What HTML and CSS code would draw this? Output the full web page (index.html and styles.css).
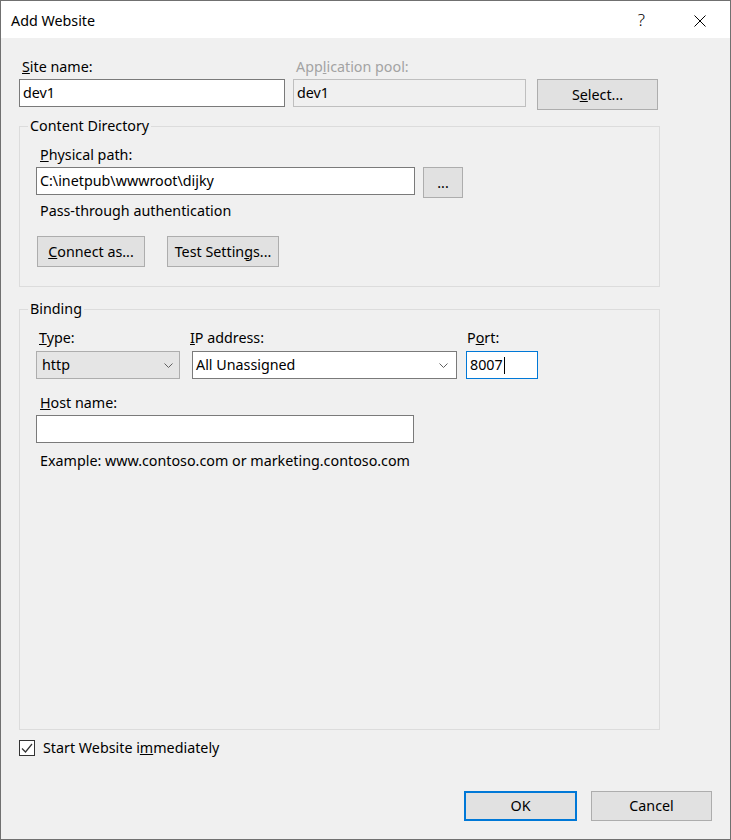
FILE: index.html
```html
<!DOCTYPE html>
<html lang="en">
<head>
<meta charset="utf-8">
<title>Add Website</title>
<link rel="stylesheet" href="styles.css">
</head>
<body>
<div class="window">
  <header class="titlebar">
    <span class="title">Add Website</span>
    <span class="help">?</span>
    <svg class="close" width="12" height="12" viewBox="0 0 12 12" aria-label="Close">
      <path d="M0.5 0.5 L11.5 11.5 M11.5 0.5 L0.5 11.5" stroke="#000" stroke-width="1" fill="none"/>
    </svg>
  </header>

  <main class="body">
    <div class="top-row">
      <div class="field f-site">
        <div class="lbl"><u>S</u>ite name:</div>
        <div class="textbox">dev1</div>
      </div>
      <div class="field f-pool">
        <div class="lbl disabled">App<u>l</u>ication pool:</div>
        <div class="textbox readonly">dev1</div>
      </div>
      <button class="btn btn-select">S<u>e</u>lect...</button>
    </div>

    <fieldset class="group group-content">
      <legend>Content Directory</legend>
      <div class="group-inner">
        <div class="lbl lbl-in"><u>P</u>hysical path:</div>
        <div class="path-row">
          <div class="textbox tb-path">C:\inetpub\wwwroot\dijky</div>
          <button class="btn btn-browse">...</button>
        </div>
        <div class="note">Pass-through authentication</div>
        <div class="btn-row">
          <button class="btn btn-connect"><u>C</u>onnect as...</button>
          <button class="btn btn-test">Test Settin<u>g</u>s...</button>
        </div>
      </div>
    </fieldset>

    <fieldset class="group group-binding">
      <legend>Binding</legend>
      <div class="group-inner">
        <div class="bind-row">
          <div class="field f-type">
            <div class="lbl lbl-type"><u>T</u>ype:</div>
            <div class="combo combo-list">
              <span class="combo-text">http</span>
              <svg class="chev" width="9" height="5" viewBox="0 0 9 5"><polyline points="0.5,0.5 4.5,4.5 8.5,0.5" fill="none" stroke="#606060" stroke-width="1"/></svg>
            </div>
          </div>
          <div class="field f-ip">
            <div class="lbl lbl-ip"><u>I</u>P address:</div>
            <div class="combo combo-edit">
              <span class="combo-text">All Unassigned</span>
              <svg class="chev" width="9" height="5" viewBox="0 0 9 5"><polyline points="0.5,0.5 4.5,4.5 8.5,0.5" fill="none" stroke="#606060" stroke-width="1"/></svg>
            </div>
          </div>
          <div class="field f-port">
            <div class="lbl lbl-port">P<u>o</u>rt:</div>
            <div class="textbox focused">8007<span class="caret"></span></div>
          </div>
        </div>
        <div class="lbl lbl-in lbl-host"><u>H</u>ost name:</div>
        <div class="textbox tb-host"></div>
        <div class="note note-example">Example: www.contoso.com or marketing.contoso.com</div>
      </div>
    </fieldset>

    <label class="check-row">
      <span class="checkbox">
        <svg width="14" height="14" viewBox="0 0 14 14"><polyline points="2,7.5 5.5,11 12,3" fill="none" stroke="#333" stroke-width="1.2"/></svg>
      </span>
      <span>Start Website i<u>m</u>mediately</span>
    </label>

    <div class="footer">
      <button class="btn btn-ok">OK</button>
      <button class="btn btn-cancel">Cancel</button>
    </div>
  </main>
</div>
</body>
</html>
```

FILE: styles.css
```css
* { box-sizing: border-box; }

html, body {
  margin: 0;
  padding: 0;
}

body {
  font-family: "Noto Sans", "Segoe UI", sans-serif;
  font-size: 14.3px;
  line-height: 20px;
  color: #000;
  background: #fff;
}

.window {
  width: 731px;
  height: 840px;
  border: 1px solid #707070;
  background: #f0f0f0;
  display: flex;
  flex-direction: column;
}

/* title bar */
.titlebar {
  height: 37px;
  flex: none;
  background: #fff;
  display: flex;
  align-items: center;
  padding: 2px 24px 0 10px;
}

.title {
  flex: 1;
}

.help {
  font-size: 17px;
  font-weight: 300;
  margin-right: 49px;
  margin-top: -1px;
}

.close {
  display: block;
  margin-top: 1px;
}

/* body */
.body {
  flex: 1;
  display: flex;
  flex-direction: column;
  padding: 19px 18px 18px 18px;
  min-height: 0;
}

.lbl {
  height: 20px;
  padding-left: 3px;
  white-space: nowrap;
}

.lbl.disabled {
  color: #a3a3a3;
}

.textbox {
  height: 28px;
  border: 1px solid #7a7a7a;
  background: #fff;
  padding: 0 3px;
  display: flex;
  align-items: center;
  white-space: nowrap;
}

.textbox.readonly {
  background: #f0f0f0;
  border-color: #bfbfbf;
}

.textbox.focused {
  border-color: #0078d7;
}

.caret {
  display: inline-block;
  width: 1px;
  height: 17px;
  background: #000;
  margin-left: 1px;
}

.field .textbox,
.field .combo {
  margin-top: 2px;
}

/* top row */
.top-row {
  display: flex;
  align-items: flex-start;
}

.f-site { width: 266px; }
.f-pool { width: 233px; margin-left: 8px; }

.btn {
  font: inherit;
  color: #000;
  height: 31px;
  background: #e1e1e1;
  border: 1px solid #adadad;
  padding: 0;
  margin: 0;
  text-align: center;
}

.btn-select {
  width: 121px;
  margin: 22px 0 0 11px;
}

/* group boxes */
.group {
  width: 641px;
  margin: 6px 0 0 0;
  border: 1px solid #dcdcdc;
  padding: 9px 0 19px 8px;
  min-width: 0;
}

.group legend {
  padding: 0 2px;
  margin: 0;
  line-height: 20px;
}

.group-inner {
  padding-left: 8px;
}

.lbl-in {
  padding-left: 4px;
}

.path-row {
  display: flex;
  align-items: flex-start;
  margin-top: 2px;
}

.tb-path {
  width: 379px;
}

.btn-browse {
  width: 40px;
  margin-left: 8px;
}

.note {
  padding-left: 4px;
  margin-top: 3px;
}

.btn-row {
  display: flex;
  margin-top: 15px;
}

.btn-connect {
  width: 108px;
  margin-left: 1px;
}

.btn-test {
  width: 112px;
  margin-left: 22px;
}

/* binding */
.group-binding {
  margin-top: 12px;
  flex: 1;
  min-height: 0;
}

.bind-row {
  display: flex;
  align-items: flex-start;
}

.f-type { width: 144px; }
.f-ip { width: 265px; margin-left: 12px; }
.f-port { width: 72px; margin-left: 9px; }

.field .combo { margin-top: 3px; }
.f-port .textbox { margin-top: 3px; }

.lbl-ip { padding-left: 0; margin-left: -2px; }
.lbl-port { padding-left: 1px; }

.combo {
  height: 28px;
  display: flex;
  align-items: center;
  white-space: nowrap;
}

.combo-text {
  flex: 1;
}

.combo-list {
  background: #e5e5e5;
  border: 1px solid #adadad;
  padding: 0 6px 0 5px;
}

.combo-edit {
  background: #fff;
  border: 1px solid #7a7a7a;
  padding: 0 8px 0 3px;
}

.chev {
  display: block;
  margin-top: 1px;
}

.lbl-host {
  margin-top: 14px;
}

.tb-host {
  width: 378px;
  margin-top: 2px;
}

.note-example {
  margin-top: 8px;
}

/* checkbox */
.check-row {
  display: flex;
  align-items: center;
  height: 20px;
  margin-top: 8px;
}

.checkbox {
  width: 16px;
  height: 16px;
  border: 1px solid #333;
  background: #fff;
  display: flex;
  align-items: center;
  justify-content: center;
  margin-right: 8px;
}

.checkbox svg { display: block; }

/* footer */
.footer {
  display: flex;
  justify-content: flex-end;
  margin-top: 33px;
}

.footer .btn {
  height: 30px;
}

.btn-ok {
  width: 113px;
  border: 2px solid #0078d7;
}

.btn-cancel {
  width: 121px;
  margin-left: 14px;
}
```
